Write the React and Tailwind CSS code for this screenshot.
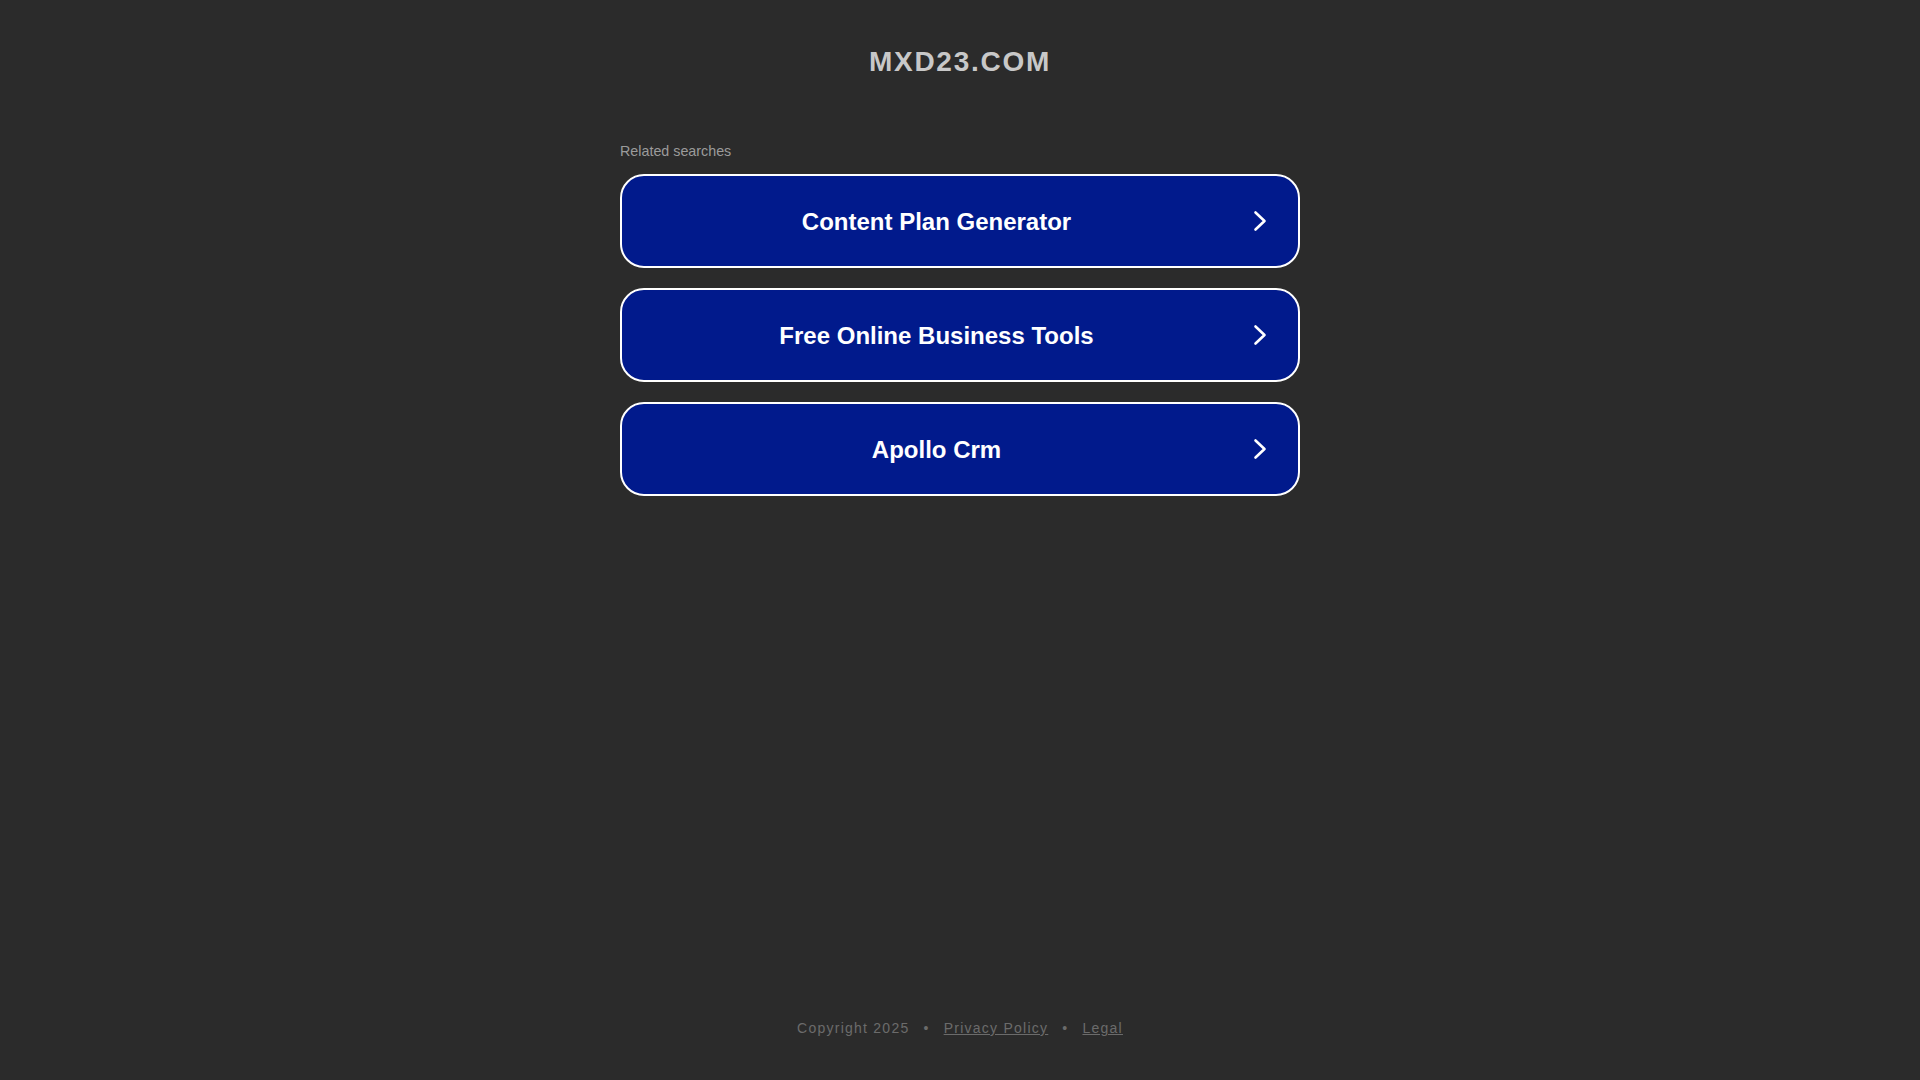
const searches = ["Content Plan Generator", "Free Online Business Tools", "Apollo Crm"];

function Chevron() {
  return (
    <svg width="14" height="22" viewBox="0 0 14 22" fill="none" className="shrink-0 ml-[2px] mr-[31px]">
      <polyline points="2.5,2.5 11.5,11 2.5,19.5" stroke="#ffffff" strokeWidth="2.6" strokeLinecap="round" strokeLinejoin="round" />
    </svg>
  );
}

export default function App() {
  return (
    <div className="min-h-screen flex flex-col bg-[#2b2b2b] font-['Liberation_Sans',Arial,sans-serif]">
      <main className="flex-1">
        <h1 className="pt-[45px] text-center text-[28px] leading-[34px] font-bold tracking-[1.75px] text-[#c8c8c8]">
          MXD23.COM
        </h1>

        <div className="w-[680px] mx-auto mt-[63px]">
          <p className="text-[14.3px] leading-[18px] text-[#9b9b9b]">Related searches</p>

          <div className="mt-[14px] flex flex-col gap-[20px]">
            {searches.map((s) => (
              <a
                key={s}
                href="#"
                className="h-[94px] flex items-center rounded-[24px] border-2 border-white bg-[#011a8c] text-white"
              >
                <span className="flex-1 pt-[2px] text-center text-[24px] font-bold leading-[30px]">{s}</span>
                <Chevron />
              </a>
            ))}
          </div>
        </div>
      </main>

      <footer className="pb-[42px] text-center text-[14px] leading-[20px] tracking-[1.25px] text-[#6b6b6b]">
        <span>Copyright 2025</span>
        <span className="mx-[14px]">•</span>
        <a href="#" className="underline">Privacy Policy</a>
        <span className="mx-[14px]">•</span>
        <a href="#" className="underline">Legal</a>
      </footer>
    </div>
  );
}
